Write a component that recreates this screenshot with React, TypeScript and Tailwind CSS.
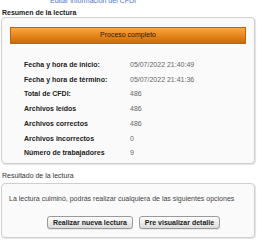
const rows = [
  { label: "Fecha y hora de inicio:", value: "05/07/2022 21:40:49" },
  { label: "Fecha y hora de término:", value: "05/07/2022 21:41:36" },
  { label: "Total de CFDI:", value: "486" },
  { label: "Archivos leídos", value: "486" },
  { label: "Archivos correctos", value: "486" },
  { label: "Archivos incorrectos", value: "0" },
  { label: "Número de trabajadores", value: "9" },
];

const Button = ({ children }: { children: string }) => (
  <button className="h-[13px] px-[5px] rounded-[3px] border border-[#9a9a9a] bg-gradient-to-b from-[#fdfdfd] to-[#dcdcdc] text-[7px] font-bold leading-none text-[#222] shadow-[0_1px_0_#e8e8e8]">
    {children}
  </button>
);

export default function App() {
  return (
    <div className="w-[263px] h-[245px] bg-white overflow-hidden font-['Liberation_Sans',Arial,sans-serif] text-[7px] text-[#333]">
      <div className="h-[5px] overflow-hidden flex items-end pl-[50px]">
        <span className="text-[#4a6fd0] leading-[8px]">Editar información del CFDI</span>
      </div>
      <div className="pl-[2px] pt-[4px] font-bold leading-[8px] text-[#222]">Resumen de la lectura</div>
      <div className="ml-[1px] w-[254px] h-[147px] rounded-[4px] border border-[#cfcfcf] bg-[#fafafa] shadow-[1px_1px_1px_#e4e4e4] pt-[9px]">
        <div className="mx-[8px] h-[17px] flex items-center justify-center border border-[#c0650a] bg-gradient-to-b from-[#f7a845] via-[#e8861c] to-[#c96c0c] text-[#2e1a00] text-[7px]">
          Proceso completo
        </div>
        <div className="pt-[14px] pl-[22px] flex flex-col">
          {rows.map((r) => (
            <div key={r.label} className="flex h-[14.7px] items-center">
              <span className="w-[106px] font-bold text-[#222]">{r.label}</span>
              <span className="text-[#666]">{r.value}</span>
            </div>
          ))}
        </div>
      </div>
      <div className="pl-[2px] pt-[8px] pb-[3px] leading-[8px] text-[#333]">Resultado de la lectura</div>
      <div className="ml-[1px] w-[254px] h-[55px] rounded-[4px] border border-[#cfcfcf] bg-[#fafafa] shadow-[1px_1px_1px_#e4e4e4]">
        <div className="pl-[7px] pt-[11px] leading-[8px] text-[#444]">
          La lectura culminó, podrás realizar cualquiera de las siguientes opciones
        </div>
        <div className="flex justify-center gap-[6px] pt-[13px] pl-[11px]">
          <Button>Realizar nueva lectura</Button>
          <Button>Pre visualizar detalle</Button>
        </div>
      </div>
    </div>
  );
}
